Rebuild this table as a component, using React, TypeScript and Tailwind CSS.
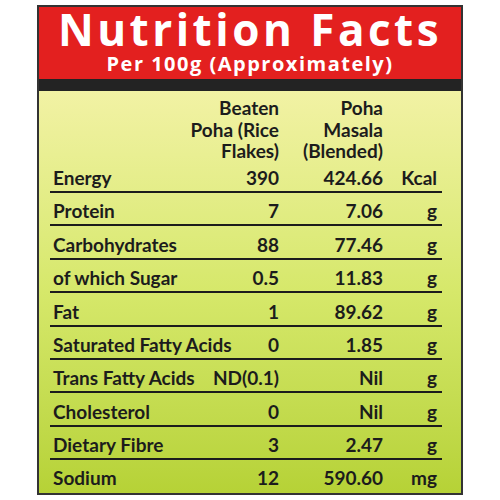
import React from "react";

const rows: [string, string, string, string][] = [
  ["Protein", "7", "7.06", "g"],
  ["Carbohydrates", "88", "77.46", "g"],
  ["of which Sugar", "0.5", "11.83", "g"],
  ["Fat", "1", "89.62", "g"],
  ["Saturated Fatty Acids", "0", "1.85", "g"],
  ["Trans Fatty Acids", "ND(0.1)", "Nil", "g"],
  ["Cholesterol", "0", "Nil", "g"],
  ["Dietary Fibre", "3", "2.47", "g"],
];

function Row({ r, last }: { r: [string, string, string, string]; last?: boolean }) {
  return (
    <div
      className={
        "flex items-end pb-[2px] " +
        (last ? "h-[31px]" : "h-[33.4px] border-b-2 border-[#1c1c1c]")
      }
    >
      <div className="flex-1 min-w-0 whitespace-nowrap pl-[3px]">{r[0]}</div>
      <div className="w-[80px] text-right whitespace-nowrap">{r[1]}</div>
      <div className="w-[104px] text-right">{r[2]}</div>
      <div className="w-[54px] text-right">{r[3]}</div>
      <div className="w-[5px]" />
    </div>
  );
}

export default function App() {
  return (
    <div className="w-[500px] h-[500px] bg-white pt-[5px]" style={{ fontFamily: "Lato, 'Open Sans', sans-serif" }}>
      <div className="ml-[37px] w-[426px] border-2 border-[#333] flex flex-col">
        <div
          className="bg-[#e3201f] h-[72px] flex flex-col items-center text-white font-bold"
          style={{ fontFamily: "'Open Sans', Lato, sans-serif" }}
        >
          <div className="text-[44px] leading-[44px] tracking-[3.5px] whitespace-nowrap">Nutrition Facts</div>
          <div className="text-[20px] leading-[20px] mt-[2.6px] tracking-[1.5px] whitespace-nowrap">Per 100g (Approximately)</div>
        </div>
        <div className="bg-[#232323] h-[12px]" />
        <div className="h-[402px] bg-gradient-to-b from-[#f2f2a4] via-[#d6e86a] to-[#b6d236] pl-[11px] pr-[19px] pt-[6px] text-[19px] font-bold text-[#1c1c1c]">
          <div className="flex leading-[21.5px]">
            <div className="flex-1" />
            <div className="w-[120px] text-right">
              Beaten
              <br />
              Poha (Rice
              <br />
              Flakes)
            </div>
            <div className="w-[104px] text-right">
              Poha
              <br />
              Masala
              <br />
              (Blended)
            </div>
            <div className="w-[59px]" />
          </div>
          <div className="leading-[22px]">
            <div className="flex items-end pb-[2px] h-[31.5px] border-b-2 border-[#1c1c1c]">
              <div className="flex-1 pl-[3px]">Energy</div>
              <div className="w-[80px] text-right">390</div>
              <div className="w-[104px] text-right">424.66</div>
              <div className="w-[54px] text-right">Kcal</div>
              <div className="w-[5px]" />
            </div>
            {rows.map((r) => (
              <Row key={r[0]} r={r} />
            ))}
            <Row r={["Sodium", "12", "590.60", "mg"]} last />
          </div>
        </div>
      </div>
    </div>
  );
}
